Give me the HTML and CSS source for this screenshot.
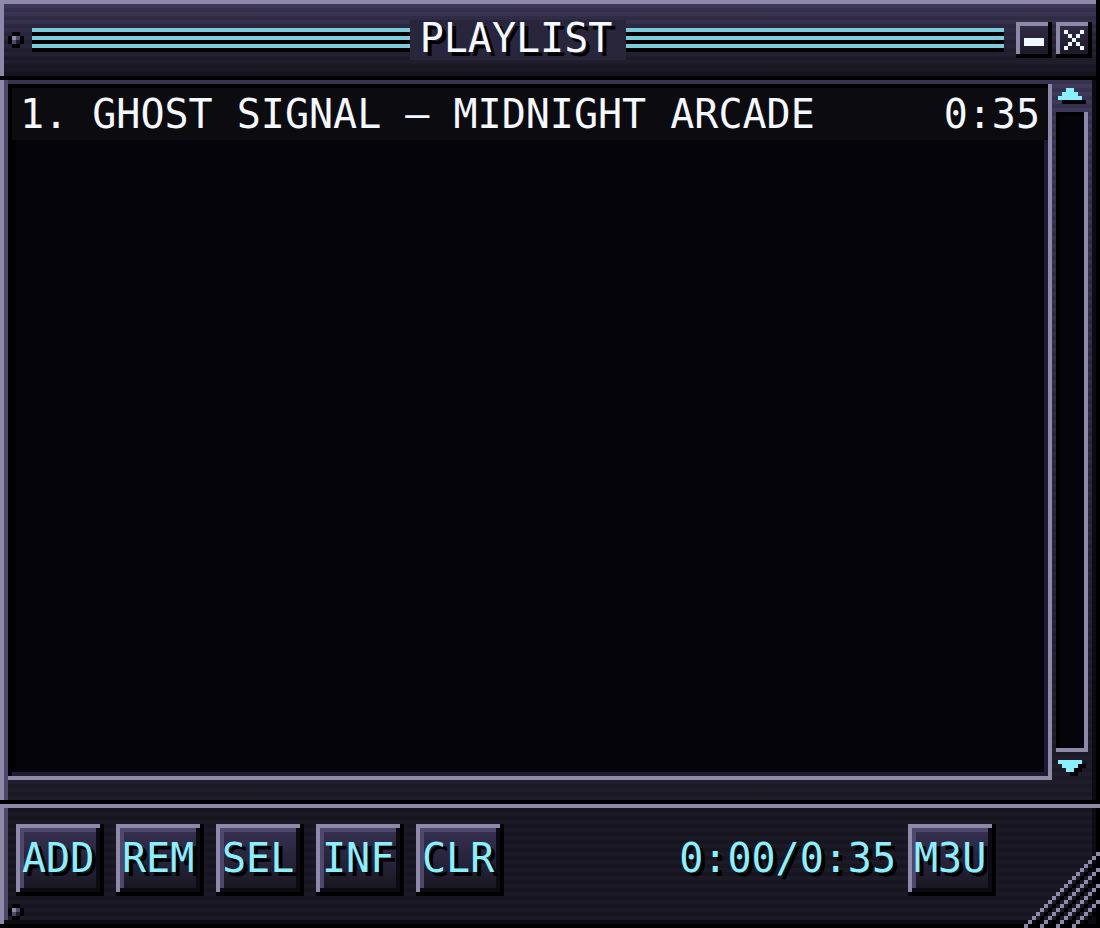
FILE: index.html
```html
<!DOCTYPE html>
<html lang="en">
<head>
    <meta charset="UTF-8">
    <meta name="viewport" content="width=device-width, initial-scale=1.0">
    <title>Playlist</title>
    <link rel="stylesheet" href="styles.css">
</head>
<body>

<div class="window">
    <header class="titlebar">
        <svg class="screw" viewBox="0 0 4 4" aria-hidden="true">
            <path fill="#000" d="M1 0h2v1h1v2h-1v1h-2v-1h-1v-2h1z"/>
            <path fill="#8e88a9" d="M1 1h1v1h-1z"/>
            <path fill="#4e486c" d="M2 1h1v1h-1zM1 2h1v1h-1z"/>
            <path fill="#1f1b30" d="M2 2h1v1h-1z"/>
        </svg>
        <div class="lines"></div>
        <h1 class="title">PLAYLIST</h1>
        <div class="lines"></div>
        <div class="window-buttons">
            <button class="small-button" aria-label="Minimize">
                <svg viewBox="0 0 5 5"><path d="M0 2h5v2h-5z"/></svg>
            </button>
            <button class="small-button" aria-label="Close">
                <svg viewBox="0 0 5 5"><path d="M0 0h1v1h-1zM4 0h1v1h-1zM1 1h1v1h-1zM3 1h1v1h-1zM2 2h1v1h-1zM1 3h1v1h-1zM3 3h1v1h-1zM0 4h1v1h-1zM4 4h1v1h-1z"/></svg>
            </button>
        </div>
    </header>

    <main class="content">
        <ol class="tracks">
            <li class="track">
                <span>1. GHOST SIGNAL – MIDNIGHT ARCADE</span>
                <span>0:35</span>
            </li>
        </ol>
        <div class="scrollbar">
            <button class="arrow up" aria-label="Scroll up">
                <svg viewBox="0 0 7 4">
                    <path fill="#000" d="M1 3h6v1h-6z"/>
                    <path fill="#8af0ff" d="M2 0h2v1h1v1h1v1h-6v-1h1v-1h1z"/>
                </svg>
            </button>
            <div class="rail"></div>
            <button class="arrow down" aria-label="Scroll down">
                <svg viewBox="0 0 7 4">
                    <path fill="#000" d="M1 1h6v1h-1v1h-1v1h-2v-1h-1v-1h-1z"/>
                    <path fill="#8af0ff" d="M0 0h6v1h-1v1h-1v1h-2v-1h-1v-1h-1z"/>
                </svg>
            </button>
        </div>
    </main>

    <footer class="toolbar">
        <button class="button">ADD</button>
        <button class="button">REM</button>
        <button class="button">SEL</button>
        <button class="button">INF</button>
        <button class="button">CLR</button>
        <span class="time">0:00/0:35</span>
        <button class="button">M3U</button>

        <svg class="screw corner" viewBox="0 0 4 4" aria-hidden="true">
            <path fill="#000" d="M1 0h2v1h1v2h-1v1h-2v-1h-1v-2h1z"/>
            <path fill="#8e88a9" d="M1 1h1v1h-1z"/>
            <path fill="#4e486c" d="M2 1h1v1h-1zM1 2h1v1h-1z"/>
            <path fill="#1f1b30" d="M2 2h1v1h-1z"/>
        </svg>
        <!-- resize grip: diagonal pixel lines -->
        <svg class="grip" viewBox="0 0 19 19" aria-hidden="true">
            <defs>
                <pattern id="grip" width="4" height="4" patternUnits="userSpaceOnUse">
                    <path fill="#8e88a9" d="M2 0h1v1h-1zM1 1h1v1h-1zM0 2h1v1h-1zM3 3h1v1h-1z"/>
                    <path fill="#000" d="M0 0h1v1h-1zM3 1h1v1h-1zM2 2h1v1h-1zM1 3h1v1h-1z"/>
                </pattern>
            </defs>
            <path fill="url(#grip)" d="M18 0h1v15l-4 4h-15v-1z"/>
        </svg>
    </footer>
</div>

</body>
</html>
```
FILE: styles.css
```css
* {
    box-sizing: border-box;
}

body {
    margin: 0;
    background: #000;
    font-family: "DejaVu Sans Mono", monospace;
    font-size: 40px;
    line-height: 40px;
    color: #f4f8ff;
}

svg {
    display: block;
    shape-rendering: crispEdges;
}

button {
    margin: 0;
    padding: 0;
    border: none;
    background: none;
    font: inherit;
    color: inherit;
    cursor: pointer;
}

.window {
    display: flex;
    flex-direction: column;
    min-height: 100vh;
}

/* title bar */
.titlebar {
    display: flex;
    align-items: center;
    height: 80px;
    padding: 0 8px;
    background:
        repeating-linear-gradient(rgba(0, 0, 0, 0.13) 0 4px, transparent 4px 8px),
        linear-gradient(#413a5e, #16141d);
    box-shadow:
        inset -4px -4px 0 #000,
        inset 4px 4px 0 #8e88a9;
}

.screw {
    width: 16px;
    height: 16px;
}

.titlebar .screw {
    margin-right: 8px;
}

.lines {
    flex: 1;
    height: 24px;
    background: repeating-linear-gradient(#7bcbdc 0 4px, #000 4px 8px);
}

.title {
    margin: 0;
    padding: 0 14px 4px 10px;
    background: #29253b;
    font-size: 40px;
    font-weight: normal;
    line-height: 36px;
    text-shadow: 4px 4px 0 #000;
}

.window-buttons {
    display: flex;
    gap: 4px;
    margin-left: 12px;
}

.small-button {
    width: 36px;
    height: 36px;
    padding: 8px;
    background: linear-gradient(#332d4a, #1a1724);
    box-shadow:
        inset -4px -4px 0 #000,
        inset 4px 4px 0 #8e88a9;
}

.small-button svg {
    width: 20px;
    height: 20px;
    fill: #eefaff;
}

/* list and scrollbar */
.content {
    flex: 1;
    display: flex;
    padding: 4px 8px 24px;
    background:
        repeating-linear-gradient(rgba(0, 0, 0, 0.13) 0 4px, transparent 4px 8px),
        linear-gradient(#3f395c, #1e1c28);
    box-shadow:
        inset -4px -4px 0 #000,
        inset 4px 0 0 #8e88a9,
        inset -8px 0 0 #0c0b11,
        inset 8px 0 0 #4e486c;
}

.tracks {
    flex: 1;
    margin: 0;
    padding: 4px;
    list-style: none;
    background: #05040a;
    box-shadow:
        inset -4px -4px 0 #8e88a9,
        inset 4px 4px 0 #000,
        inset -8px -8px 0 #1f1934,
        inset 8px 8px 0 #020203;
}

/* the row runs up to the light right edge of the list */
.track {
    display: flex;
    justify-content: space-between;
    padding: 6px 8px;
    background: #0c0b10;
    white-space: pre;
}

.scrollbar {
    display: flex;
    flex-direction: column;
    width: 40px;
}

.arrow {
    height: 28px;
}

.arrow svg {
    width: 28px;
    height: 16px;
    margin: 0 auto;
}

.up {
    padding-bottom: 4px;
}

.down {
    padding-top: 4px;
}

.rail {
    flex: 1;
    margin: 0 4px;
    background: #05040a;
    box-shadow:
        inset -4px -4px 0 #8e88a9,
        inset 4px 4px 0 #000;
}

/* bottom bar */
.toolbar {
    position: relative;
    display: flex;
    gap: 12px;
    height: 124px;
    padding: 20px 104px 0 16px;
    color: #8af0ff;
    text-shadow: 4px 4px 0 #000;
    background: repeating-linear-gradient(#1c1a26 0 4px, #171520 4px 8px);
    box-shadow:
        inset 0 4px 0 #8e88a9,
        inset -4px -4px 0 #000,
        inset 4px 0 0 #8e88a9,
        inset -8px -8px 0 #0c0b11,
        inset 8px 0 0 #4e486c;
}

.button {
    width: 88px;
    height: 72px;
    padding: 0 10px 4px 6px;
    text-shadow: inherit;
    white-space: nowrap;
    background: linear-gradient(#3a3356, #16141d);
    box-shadow:
        inset -4px -4px 0 #000,
        inset 4px 4px 0 #8e88a9,
        inset -8px -8px 0 #0c0b11,
        inset 8px 8px 0 #4e486c;
}

.time {
    margin-left: auto;
    padding-top: 14px;
}

.corner {
    position: absolute;
    left: 8px;
    bottom: 8px;
}

.grip {
    position: absolute;
    right: 0;
    bottom: 0;
    width: 76px;
    height: 76px;
    cursor: nwse-resize;
}
```
